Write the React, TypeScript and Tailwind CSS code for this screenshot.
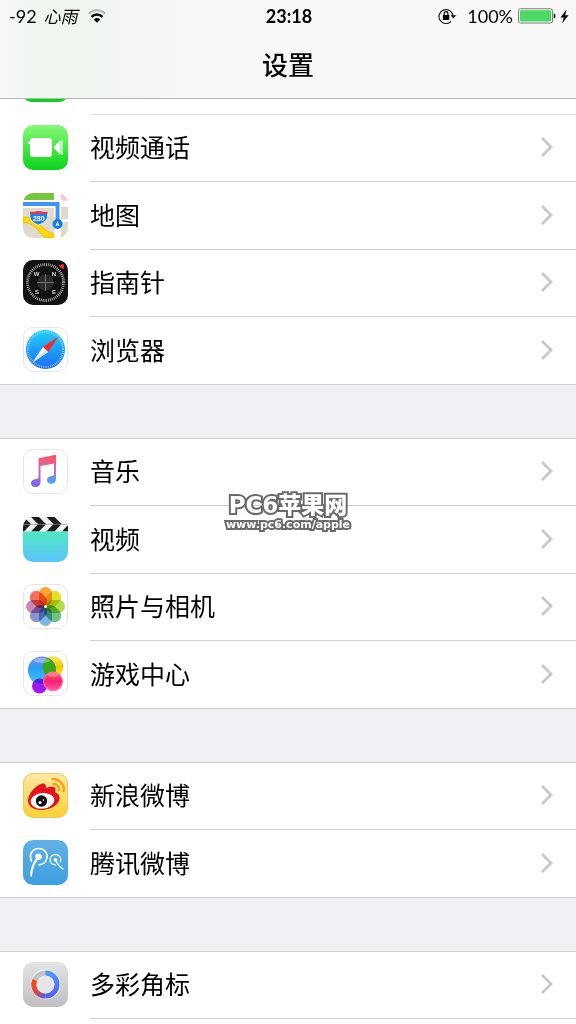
import type { ReactNode } from 'react';
import clsx from 'clsx';

interface SettingsItem {
  label: string;
  icon: ReactNode;
}

const Svg = ({ children }: { children: ReactNode }) => (
  <svg viewBox="0 0 45 45" className="mb-0.5 block size-[45px]" aria-hidden="true">
    {children}
  </svg>
);

const WhiteTile = () => (
  <rect x="0.5" y="0.5" width="44" height="44" rx="9.5" fill="#fff" stroke="#e6e6e8" />
);

const FaceTimeIcon = () => (
  <Svg>
    <defs>
      <linearGradient id="facetime" x1="0" y1="0" x2="0" y2="1">
        <stop offset="0" stopColor="#86f978" />
        <stop offset="1" stopColor="#0bd318" />
      </linearGradient>
    </defs>
    <rect width="45" height="45" rx="10" fill="url(#facetime)" />
    <rect x="7" y="13" width="22" height="19" rx="3" fill="#fff" />
    <path d="M5 19v-2l2-.5V19zM30.500 22.500l7-7.500v15zM38.300 15h1.200v15h-1.200z" fill="#fff" />
  </Svg>
);

const MapsIcon = () => (
  <Svg>
    <defs>
      <clipPath id="maps-clip">
        <rect width="45" height="45" rx="10" />
      </clipPath>
    </defs>
    <g clipPath="url(#maps-clip)">
      <rect width="45" height="45" fill="#fff" />
      <path d="M0 0h31v7H0z" fill="#76c63d" />
      <path d="M0 15h31v30H0zM38 14h7v12h-7zM38 29h7v16h-7z" fill="#e0dacb" />
      <path d="M38 0h7v8l-7-1z" fill="#fbc9d5" />
      <path d="M0 24c11 0 11 2 17 8s9 7 14 9v4h-9c-4-4-8-10-13-13s-5-2-9-2z" fill="#ffd800" stroke="#f1b51c" strokeWidth="0.8" />
      <path d="M38 43h4v2h-4z" fill="#ffd800" />
      <path d="M0 9h36.500v22h-4.500V13.500H0z" fill="#3e94fb" />
      <path d="M0 13.500h32V31" fill="none" stroke="#fff" strokeWidth="1.200" />
      <circle cx="34.500" cy="31" r="5" fill="#0a7df5" />
      <path d="M34.500 28l2 5.200-2-1-2 1z" fill="#fff" />
      <path d="M7 18.500c3 1 5-.500 8.500-.500s6 1.500 9 .500c1.500 8-3 11.500-9 13.500C9 30 5.500 26 7 18.500z" fill="#1c7fee" stroke="#fff" strokeWidth="0.8" />
      <path d="M7 18.500c3 1 5-.500 8.500-.500s6 1.500 9 .500v2.500H7z" fill="#e5384b" />
      <text x="15.800" y="27.500" textAnchor="middle" fill="#fff" className="font-['Liberation_Sans'] text-[7px] font-bold">
        280
      </text>
    </g>
  </Svg>
);

const CompassIcon = () => (
  <Svg>
    <rect width="45" height="45" rx="10" fill="#121212" />
    <circle cx="22.500" cy="22.500" r="18" fill="none" stroke="#c4c4c4" strokeWidth="2.800" strokeDasharray="0.800 1.085" />
    <circle cx="22.500" cy="22.500" r="8" fill="#2b2b2b" />
    <path d="M14 22.500h17M22.500 14v17" stroke="#777" strokeWidth="0.900" />
    <path d="M36 5.500l4.500-.8L40 9z" fill="#fb2b2b" stroke="#fb2b2b" />
    <g fill="#dcdcdc" textAnchor="middle" className="font-['Liberation_Sans'] text-[6px] font-bold">
      <text x="13.500" y="16">W</text>
      <text x="31" y="16">N</text>
      <text x="14" y="33.500">S</text>
      <text x="31" y="33.500">E</text>
    </g>
  </Svg>
);

const SafariIcon = () => (
  <Svg>
    <defs>
      <linearGradient id="safari" x1="0" y1="0" x2="0" y2="1">
        <stop offset="0" stopColor="#1fd1fb" />
        <stop offset="1" stopColor="#1d6cf2" />
      </linearGradient>
    </defs>
    <WhiteTile />
    <circle cx="22.500" cy="22.500" r="19.500" fill="url(#safari)" />
    <circle cx="22.500" cy="22.500" r="17.500" fill="none" stroke="#cdeaff" strokeOpacity="0.800" strokeWidth="2.200" strokeDasharray="0.600 1.232" />
    <path d="M35.500 9.500L25 25l-5-5z" fill="#fb2722" />
    <path d="M9.500 35.500L20 20l5 5z" fill="#fff" />
    <path d="M9.500 35.500L22.500 22.500 25 25z" fill="#d9e6f5" />
  </Svg>
);

const MusicIcon = () => (
  <Svg>
    <defs>
      <linearGradient id="music" gradientUnits="userSpaceOnUse" x1="26" y1="6" x2="20" y2="38">
        <stop offset="0" stopColor="#fd5260" />
        <stop offset="0.450" stopColor="#d569b4" />
        <stop offset="1" stopColor="#7d63fb" />
      </linearGradient>
      <linearGradient id="music-right" gradientUnits="userSpaceOnUse" x1="0" y1="8" x2="0" y2="34">
        <stop offset="0" stopColor="#fd5260" />
        <stop offset="0.500" stopColor="#c172c9" />
        <stop offset="1" stopColor="#37a8fd" />
      </linearGradient>
    </defs>
    <WhiteTile />
    <path d="M15.500 10.500c0-1 .5-1.400 1.400-1.600L33 5.800v8.400L17.500 17v16c0 3-2 5-5 5-2.600 0-4.500-1.500-4.500-3.700 0-2.500 2.100-4 4.700-4.200 2-.2 2.800-.6 2.800-2.300z" fill="url(#music)" />
    <path d="M31 11h2v19c0 3-2 4.800-4.800 4.800-2.400 0-4.200-1.400-4.200-3.600 0-2.500 2-3.900 4.500-4.200 1.800-.2 2.500-.7 2.500-2.200z" fill="url(#music-right)" />
  </Svg>
);

const VideosIcon = () => (
  <Svg>
    <defs>
      <linearGradient id="videos" x1="0" y1="0" x2="0" y2="1">
        <stop offset="0" stopColor="#50e8c3" />
        <stop offset="1" stopColor="#5ac4fb" />
      </linearGradient>
      <clipPath id="videos-clip">
        <rect width="45" height="45" rx="10" />
      </clipPath>
    </defs>
    <g clipPath="url(#videos-clip)">
      <rect width="45" height="15" fill="#f1f1f1" />
      <path d="M-7 0H1l7 7-7 7.500h-8l7-7.500zM8 0h8l7 7-7 7.500H8L15 7zM23.500 0h8l7 7-7 7.500h-8l7-7.500zM39 14.500h6V8z" fill="#1b1b1b" />
      <path d="M0 7.300h45" stroke="#999" strokeWidth="0.700" />
      <rect y="14.500" width="45" height="30.500" fill="url(#videos)" />
    </g>
  </Svg>
);

const petals = [
  { angle: 0, color: '#fb9a1c' },
  { angle: 45, color: '#e3dc12' },
  { angle: 90, color: '#add53c' },
  { angle: 135, color: '#5fbb78' },
  { angle: 180, color: '#6fb0e2' },
  { angle: 225, color: '#8088c8' },
  { angle: 270, color: '#c67bb0' },
  { angle: 315, color: '#f0604d' },
];

const PhotosIcon = () => (
  <Svg>
    <WhiteTile />
    {petals.map(({ angle, color }) => (
      <rect
        key={angle}
        x="16"
        y="3"
        width="13"
        height="19"
        rx="6.500"
        fill={color}
        fillOpacity="0.900"
        transform={`rotate(${angle} 22.5 22.5)`}
        className="mix-blend-multiply"
      />
    ))}
    <circle cx="22.500" cy="22.500" r="1.500" fill="#fff" />
  </Svg>
);

const GameCenterIcon = () => (
  <Svg>
    <defs>
      <linearGradient id="gc-blue" x1="0" y1="0" x2="0" y2="1">
        <stop offset="0" stopColor="#7a8df0" />
        <stop offset="0.400" stopColor="#2b9df3" />
        <stop offset="1" stopColor="#3cc8fb" />
      </linearGradient>
      <linearGradient id="gc-yellow" x1="0" y1="0" x2="0" y2="1">
        <stop offset="0" stopColor="#f7e76a" />
        <stop offset="0.500" stopColor="#f3c80c" />
        <stop offset="1" stopColor="#f7e51c" />
      </linearGradient>
      <linearGradient id="gc-red" x1="0" y1="0" x2="0" y2="1">
        <stop offset="0" stopColor="#fb5a5c" />
        <stop offset="0.500" stopColor="#fb1f72" />
        <stop offset="1" stopColor="#fb64b0" />
      </linearGradient>
      <clipPath id="gc-clip">
        <circle cx="19" cy="19.500" r="14" />
      </clipPath>
    </defs>
    <WhiteTile />
    <circle cx="16.500" cy="35" r="7.500" fill="#a416ef" />
    <circle cx="30" cy="15.500" r="10.500" fill="url(#gc-yellow)" />
    <circle cx="19" cy="19.500" r="14" fill="url(#gc-blue)" />
    <circle cx="30" cy="15.500" r="10.500" fill="#3da51c" clipPath="url(#gc-clip)" />
    <ellipse cx="19" cy="9.500" rx="8" ry="2.500" fill="#fff" fillOpacity="0.300" />
    <circle cx="16.500" cy="35" r="7.500" fill="#5b1fe0" clipPath="url(#gc-clip)" />
    <circle cx="30" cy="30.500" r="10" fill="url(#gc-red)" />
    <circle cx="30" cy="30.500" r="9.300" fill="none" stroke="#fff" strokeOpacity="0.300" />
    <ellipse cx="30" cy="24" rx="5.500" ry="2" fill="#fff" fillOpacity="0.250" />
  </Svg>
);

const WeiboIcon = () => (
  <Svg>
    <defs>
      <linearGradient id="weibo" x1="0" y1="0" x2="0" y2="1">
        <stop offset="0" stopColor="#fbe9a4" />
        <stop offset="1" stopColor="#fdd034" />
      </linearGradient>
    </defs>
    <rect x="0.5" y="0.5" width="44" height="44" rx="9.500" fill="url(#weibo)" stroke="#ecc95a" />
    <path d="M18 11c3-1.200 5.300-.2 5 4 4-1.500 8-2 9.200.3.700 1.400.2 2.800-.2 4 3 1 4.800 3 4.600 6-.4 6-8 11.400-17.600 11.700C11 37.300 5 33.500 5 27.500 5 21 12 13 18 11z" fill="#e6111c" />
    <ellipse cx="19.500" cy="27.800" rx="11.800" ry="7.800" fill="#fff" transform="rotate(-6 19.500 27.800)" />
    <circle cx="18.500" cy="28" r="5.700" fill="#111" />
    <circle cx="17" cy="29.500" r="1.600" fill="#fff" />
    <circle cx="20.300" cy="27" r="0.800" fill="#fff" />
    <path d="M29.500 6c6.500-.3 12 5 11.300 12" fill="none" stroke="#faa119" strokeWidth="2.500" strokeLinecap="round" />
    <path d="M30.500 11c3.500 0 6 2.600 5.600 6.200" fill="none" stroke="#faa119" strokeWidth="2.500" strokeLinecap="round" />
  </Svg>
);

const TencentWeiboIcon = () => (
  <Svg>
    <defs>
      <linearGradient id="tencent" x1="0" y1="0" x2="0" y2="1">
        <stop offset="0" stopColor="#62b1e4" />
        <stop offset="1" stopColor="#3b9fe0" />
      </linearGradient>
    </defs>
    <rect width="45" height="45" rx="10" fill="url(#tencent)" />
    <circle cx="15.500" cy="16.800" r="3.200" fill="#fff" />
    <path d="M14.500 18.500C10.500 23 8.500 29 8 35.500" fill="none" stroke="#fff" strokeWidth="2.200" strokeLinecap="round" />
    <path d="M8.500 21c-3-6.500 1-12.500 7.500-12.500 5 0 8.300 3.800 8 8.500-.3 4.500-3.500 7.500-8 7.800" fill="none" stroke="#fff" strokeWidth="1.700" strokeLinecap="round" />
    <circle cx="32.500" cy="19.800" r="1.900" fill="#fff" />
    <path d="M33 21c1.500 3.500 4 6 7 8" fill="none" stroke="#e4f2fb" strokeWidth="1.500" strokeLinecap="round" />
    <path d="M37.500 22c1.300-4-1-7.300-4.800-7.500-3.300-.1-5.700 2.300-5.700 5.300 0 3.200 2.500 5.200 5.500 5" fill="none" stroke="#e4f2fb" strokeWidth="1.300" strokeLinecap="round" />
  </Svg>
);

const BadgeColorIcon = () => (
  <Svg>
    <defs>
      <linearGradient id="badge-bg" x1="0" y1="0" x2="0" y2="1">
        <stop offset="0" stopColor="#e4e4e4" />
        <stop offset="1" stopColor="#bfbfc2" />
      </linearGradient>
      <linearGradient id="badge-left" x1="0" y1="0" x2="1" y2="1">
        <stop offset="0" stopColor="#fb4a12" />
        <stop offset="0.400" stopColor="#e0443c" />
        <stop offset="1" stopColor="#6a5ad8" />
      </linearGradient>
      <linearGradient id="badge-right" x1="0" y1="0" x2="0" y2="1">
        <stop offset="0" stopColor="#4a98fb" />
        <stop offset="1" stopColor="#5065f0" />
      </linearGradient>
    </defs>
    <rect width="45" height="45" rx="10" fill="url(#badge-bg)" />
    <circle cx="22.500" cy="22.500" r="15" fill="#f4f4f4" />
    <circle cx="22.500" cy="22.500" r="11.500" fill="#dedede" stroke="#c4c4c6" strokeWidth="5" />
    <path d="M11.800 18C8.500 26 14 34 22.500 34" fill="none" stroke="url(#badge-left)" strokeWidth="5" />
    <path d="M22.500 11a11.500 11.500 0 010 23" fill="none" stroke="url(#badge-right)" strokeWidth="5" />
    <circle cx="22.500" cy="22.500" r="9" fill="#e6e6e6" />
  </Svg>
);

const Chevron = () => (
  <svg viewBox="0 0 14 22" className="mr-[22px] h-[22px] w-[14px]" fill="none" aria-hidden="true">
    <path d="M2 2l9 9-9 9" stroke="#c7c7cc" strokeWidth="2.800" />
  </svg>
);

const groups: SettingsItem[][] = [
  [
    { label: '视频通话', icon: <FaceTimeIcon /> },
    { label: '地图', icon: <MapsIcon /> },
    { label: '指南针', icon: <CompassIcon /> },
    { label: '浏览器', icon: <SafariIcon /> },
  ],
  [
    { label: '音乐', icon: <MusicIcon /> },
    { label: '视频', icon: <VideosIcon /> },
    { label: '照片与相机', icon: <PhotosIcon /> },
    { label: '游戏中心', icon: <GameCenterIcon /> },
  ],
  [
    { label: '新浪微博', icon: <WeiboIcon /> },
    { label: '腾讯微博', icon: <TencentWeiboIcon /> },
  ],
  [{ label: '多彩角标', icon: <BadgeColorIcon /> }],
];

const StatusBar = () => (
  <div className="grid h-8 grid-cols-3 items-center pr-[7px] pl-[9px] text-[18px] leading-8">
    <div className="flex items-center">
      <span>-92</span>
      <span className="ml-[7px] font-['Noto_Sans_CJK_SC'] text-[17px] italic">心雨</span>
      <svg viewBox="0 0 18 14" className="ml-[10px] h-[14px] w-[18px]" fill="none" aria-hidden="true">
        <path d="M.8 4.800c4.600-4.600 11.800-4.600 16.400 0" stroke="#b4b4b4" strokeWidth="2" />
        <path d="M3.500 7.800c3.200-3 7.800-3 11 0" stroke="#000" strokeWidth="2.400" />
        <path d="M5.800 10.400c1.900-1.800 4.500-1.800 6.400 0L9 13.700z" fill="#000" />
      </svg>
    </div>
    <span className="text-center font-bold">23:18</span>
    <div className="flex items-center justify-end">
      <svg viewBox="0 0 19 16" className="mr-[10px] h-4 w-[19px]" fill="none" aria-hidden="true">
        <path d="M13 13.500A7 7 0 1115 8" stroke="#222" strokeWidth="1.200" />
        <path d="M12.500 7.300h5.800l-2.900 3.200z" fill="#111" />
        <rect x="4.800" y="7" width="6.500" height="5" rx="0.500" fill="#000" />
        <path d="M6.200 7V5.500a1.850 1.850 0 013.700 0V7" stroke="#000" strokeWidth="1.200" />
      </svg>
      <span>100%</span>
      <svg viewBox="0 0 38 16" className="ml-[5px] h-4 w-[38px]" aria-hidden="true">
        <rect x="0.600" y="0.800" width="34" height="14.200" rx="2" fill="#fff" stroke="#777" />
        <rect x="2" y="2.200" width="31.200" height="11.400" rx="1" fill="#4cd964" />
        <path d="M35.800 5.200c2.200.6 2.200 4.800 0 5.400z" fill="#111" />
      </svg>
      <svg viewBox="0 0 9 15" className="ml-1 h-[15px] w-[9px]" aria-hidden="true">
        <path d="M6.500.5L.5 8.500h3.300L2 14.500l6.500-8.300H5.200z" fill="#000" />
      </svg>
    </div>
  </div>
);

const Row = ({ item, last }: { item: SettingsItem; last: boolean }) => (
  <li className={clsx('h-[67px] even:h-[68px]', last && 'border-b border-[#cfcfd3]')}>
    <a href="#" className="flex h-full items-center pl-[23px]">
      {item.icon}
      <span
        className={clsx(
          'ml-[22px] flex h-full flex-1 items-center justify-between pb-0.5 text-[25px] leading-8',
          !last && 'border-b border-[#cfcfd3]'
        )}
      >
        {item.label}
        <Chevron />
      </span>
    </a>
  </li>
);

const App = () => {
  return (
    <div className="relative flex min-h-screen flex-col bg-[#efeff4] font-['Lato','Noto_Sans_CJK_SC',sans-serif] text-black">
      <header className="h-[99px] border-b border-[#b5b5b8] bg-[#f7f7f7] bg-linear-to-r from-[#f5f8f5] via-[#eff5ef] via-10% to-[#f7f7f7] to-35%">
        <StatusBar />
        <h1 className="pt-[15px] text-center text-[26px] leading-9 font-medium">设置</h1>
      </header>

      <main className="flex flex-1 flex-col gap-[53px]">
        {groups.map((items, index) => (
          <section
            key={index}
            className={clsx('bg-white', index > 0 && 'border-t border-[#cfcfd3]', index === groups.length - 1 && 'flex-1')}
          >
            {index === 0 && (
              // tail of the row that is scrolled under the header
              <div className="flex h-4 items-start pl-[23px]">
                <svg viewBox="0 0 45 3" className="h-[3px] w-[45px]" aria-hidden="true">
                  <path d="M2 0h41c-2 2-4 3-7 3H9C6 3 4 2 2 0z" fill="#0bd318" />
                </svg>
                <span className="ml-[22px] h-full flex-1 border-b border-[#e2e2e4]" />
              </div>
            )}
            <ul>
              {items.map((item, i) => (
                <Row key={item.label} item={item} last={i === items.length - 1 && index < groups.length - 1} />
              ))}
            </ul>
          </section>
        ))}
      </main>

      <div className="pointer-events-none absolute inset-x-0 top-[493px] text-center font-['DejaVu_Sans','Noto_Sans_CJK_SC',sans-serif] font-bold text-white [paint-order:stroke_fill] [-webkit-text-stroke:4px_#6a6a6a]">
        <p className="text-[23px] leading-6 font-black">PC6苹果网</p>
        <p className="text-[11px] leading-4">www.pc6.com/apple</p>
      </div>
    </div>
  );
};

export default App;
